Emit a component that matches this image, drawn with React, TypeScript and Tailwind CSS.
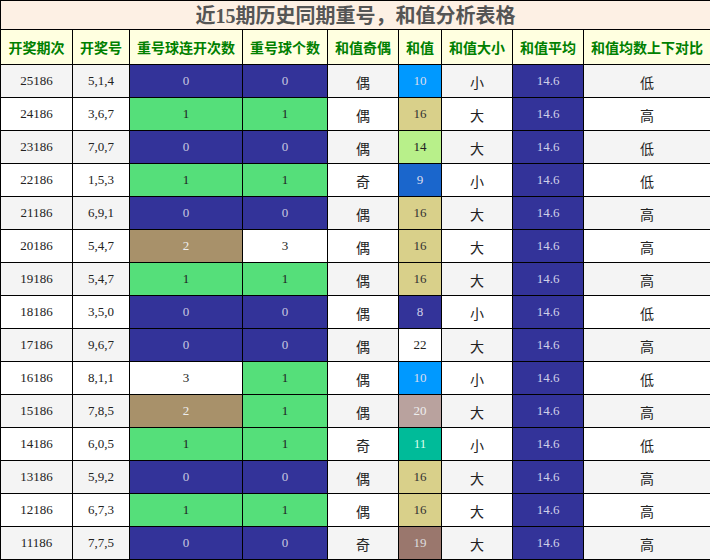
const cols = [72, 57, 113, 85, 71, 43, 71, 71, 127];

const headers = ['开奖期次', '开奖号', '重号球连开次数', '重号球个数', '和值奇偶', '和值', '和值大小', '和值平均', '和值均数上下对比'];

type Row = [string, string, number, number, string, number, string, string];

const rows: Row[] = [
  ['25186', '5,1,4', 0, 0, '偶', 10, '小', '低'],
  ['24186', '3,6,7', 1, 1, '偶', 16, '大', '高'],
  ['23186', '7,0,7', 0, 0, '偶', 14, '大', '低'],
  ['22186', '1,5,3', 1, 1, '奇', 9, '小', '低'],
  ['21186', '6,9,1', 0, 0, '偶', 16, '大', '高'],
  ['20186', '5,4,7', 2, 3, '偶', 16, '大', '高'],
  ['19186', '5,4,7', 1, 1, '偶', 16, '大', '高'],
  ['18186', '3,5,0', 0, 0, '偶', 8, '小', '低'],
  ['17186', '9,6,7', 0, 0, '偶', 22, '大', '高'],
  ['16186', '8,1,1', 3, 1, '偶', 10, '小', '低'],
  ['15186', '7,8,5', 2, 1, '偶', 20, '大', '高'],
  ['14186', '6,0,5', 1, 1, '奇', 11, '小', '低'],
  ['13186', '5,9,2', 0, 0, '偶', 16, '大', '高'],
  ['12186', '6,7,3', 1, 1, '偶', 16, '大', '高'],
  ['11186', '7,7,5', 0, 0, '奇', 19, '大', '高'],
];

// colour for 重号 columns
const countCls = (n: number) => {
  if (n === 0) return 'bg-[#333399] text-[#c8c8e0]';
  if (n === 1) return 'bg-[#55df7a] text-[#222]';
  if (n === 2) return 'bg-[#a8916a] text-[#eee]';
  return 'bg-white text-[#222]';
};

const sumCls: Record<number, string> = {
  8: 'bg-[#333399] text-[#d0d0e8]',
  9: 'bg-[#1a66cc] text-[#dde]',
  10: 'bg-[#0099ff] text-[#dde]',
  11: 'bg-[#00bb99] text-[#dfe]',
  14: 'bg-[#b8f08a] text-[#222]',
  16: 'bg-[#d9d08a] text-[#333]',
  19: 'bg-[#9a776d] text-[#ddd]',
  20: 'bg-[#b9a29e] text-[#eee]',
  22: 'bg-white text-[#222]',
};

const num = "font-['Liberation_Serif',serif] text-[13px]";
const cjk = "font-['Noto_Sans_CJK_SC',sans-serif] text-[14px] text-[#222]";

export default function App() {
  return (
    <div className="w-[710px] h-[560px] bg-white overflow-hidden">
      <table className="w-[710px] table-fixed border-collapse">
        <colgroup>
          {cols.map((w, i) => (
            <col key={i} style={{ width: w }} />
          ))}
        </colgroup>
        <thead>
          <tr className="h-[29px]">
            <th
              colSpan={9}
              className="border border-black bg-[#fdf0e4] p-0 text-center font-['Noto_Sans_CJK_SC',sans-serif] text-[20px] font-bold leading-none text-[#555]"
            >
              近<span className="font-['Liberation_Serif',serif]">15</span>期历史同期重号，和值分析表格
            </th>
          </tr>
          <tr className="h-[35px]">
            {headers.map((h) => (
              <th
                key={h}
                className="border border-black bg-[#ffffe0] p-0 text-center font-['Noto_Sans_CJK_SC',sans-serif] text-[14px] font-bold text-[#008000]"
              >
                {h}
              </th>
            ))}
          </tr>
        </thead>
        <tbody>
          {rows.map((r, i) => (
            <tr key={r[0]} className={`h-[33px] ${i % 2 === 0 ? 'bg-[#f4f4f4]' : 'bg-white'}`}>
              <td className={`border border-black p-0 text-center text-[#222] ${num}`}>{r[0]}</td>
              <td className={`border border-black p-0 text-center text-[#222] ${num}`}>{r[1]}</td>
              <td className={`border border-black p-0 text-center ${num} ${countCls(r[2])}`}>{r[2]}</td>
              <td className={`border border-black p-0 text-center ${num} ${countCls(r[3])}`}>{r[3]}</td>
              <td className={`border border-black p-0 text-center pt-[2px] ${cjk}`}>{r[4]}</td>
              <td className={`border border-black p-0 text-center ${num} ${sumCls[r[5]]}`}>{r[5]}</td>
              <td className={`border border-black p-0 text-center pt-[2px] ${cjk}`}>{r[6]}</td>
              <td className={`border border-black bg-[#333399] p-0 text-center text-[#d0d0e8] ${num}`}>14.6</td>
              <td className={`border border-black p-0 text-center pt-[2px] ${cjk}`}>{r[7]}</td>
            </tr>
          ))}
        </tbody>
      </table>
    </div>
  );
}
